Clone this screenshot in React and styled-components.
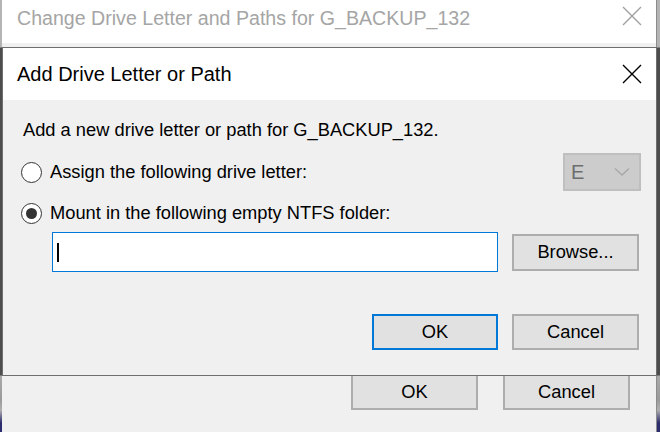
import React from 'react'
import styled, { createGlobalStyle } from 'styled-components'

const Global = createGlobalStyle`
  html, body { margin: 0; padding: 0; background: #f0f0f0; }
  body { font-family: "Liberation Sans", Arial, sans-serif; }
`;

const Desktop = styled.div`
  position: relative;
  width: 660px;
  height: 432px;
  overflow: hidden;
  display: flex;
`;

const Edge = styled.div`
  width: ${p => p.w}px;
  flex: none;
  background: linear-gradient(to bottom, #b4b4b4 0px, #b4b4b4 47px, #4d4d4d 48px, #4d4d4d 375px, #a9a9a9 376px, #9a9a9a 400px, #b0b0b0 410px, #2c2c6e 423px, #2c2c6e 432px);
`;

const BackWindow = styled.div`
  flex: 1;
  display: flex;
  flex-direction: column;
  background: #f0f0f0;
  border-right: 1px solid #8c8c8c;
`;

const BackTitle = styled.div`
  height: 43px;
  flex: none;
  background: #fff;
  display: flex;
  align-items: flex-start;
  justify-content: space-between;
  padding: 6px 14px 0 15px;
  box-sizing: border-box;
  color: #a5a5a5;
  font-size: 19.6px;
  line-height: 24px;
`;

const BackBody = styled.div`
  flex: 1;
  display: flex;
  flex-direction: column;
  justify-content: flex-end;
`;

const ButtonRow = styled.div`
  display: flex;
  justify-content: flex-end;
  gap: ${p => p.gap}px;
  padding: ${p => p.pad};
`;

const Button = styled.div`
  width: ${p => p.w || 126}px;
  height: ${p => p.h || 36}px;
  box-sizing: border-box;
  background: #e1e1e1;
  border: 2px solid ${p => (p.$default ? '#0078d7' : '#adadad')};
  display: flex;
  align-items: center;
  justify-content: center;
  font-size: 18.3px;
  color: #000;
`;

const FrontWindow = styled.div`
  position: absolute;
  left: 2px;
  top: 47px;
  width: 655px;
  height: 329px;
  box-sizing: border-box;
  border: 1px solid #6e6e6e;
  background: #f0f0f0;
  display: flex;
  flex-direction: column;
`;

const FrontTitle = styled.div`
  height: 52px;
  flex: none;
  background: #fff;
  display: flex;
  align-items: center;
  justify-content: space-between;
  padding: 0 14px 0 14px;
  font-size: 20px;
  color: #000;
`;

const FrontBody = styled.div`
  display: flex;
  flex-direction: column;
  padding: 18px 17px 0 18px;
  font-size: 18.3px;
  color: #000;
`;

const Intro = styled.div`
  line-height: 24px;
  padding-left: 2px;
`;

const OptionRow = styled.div`
  display: flex;
  align-items: center;
  justify-content: space-between;
  height: ${p => p.h}px;
  margin-top: ${p => p.mt}px;
`;

const Option = styled.label`
  display: flex;
  align-items: center;
  gap: 8px;
`;

const Radio = styled.span`
  width: 21px;
  height: 21px;
  box-sizing: border-box;
  border-radius: 50%;
  border: 1.5px solid #333;
  background: #fff;
  display: flex;
  align-items: center;
  justify-content: center;
  &::after {
    content: '';
    width: 11px;
    height: 11px;
    border-radius: 50%;
    background: ${p => (p.checked ? '#333' : 'transparent')};
  }
`;

const Select = styled.div`
  width: 78px;
  height: 38px;
  margin-right: -2px;
  box-sizing: border-box;
  background: #cccccc;
  border: 2px solid #bfbfbf;
  display: flex;
  align-items: center;
  justify-content: space-between;
  padding: 0 9px 0 6px;
  color: #6d6d6d;
  font-size: 20px;
`;

const PathRow = styled.div`
  display: flex;
  align-items: center;
  margin-top: 7px;
  margin-left: 31px;
  gap: 14px;
`;

const Input = styled.div`
  width: 446px;
  height: 40px;
  box-sizing: border-box;
  background: #fff;
  border: 1.5px solid #0078d7;
  display: flex;
  align-items: center;
  padding-left: 4px;
`;

const Caret = styled.span`
  width: 2px;
  height: 19px;
  background: #000;
`;

const Close = ({ color }) => (
  <svg width="20" height="20" viewBox="0 0 20 20">
    <path d="M1 1 L19 19 M19 1 L1 19" stroke={color} strokeWidth="1.4" fill="none" />
  </svg>
);

const Chevron = () => (
  <svg width="16" height="10" viewBox="0 0 16 10">
    <path d="M1 1.5 L8 8 L15 1.5" stroke="#a8a8a8" strokeWidth="1.4" fill="none" />
  </svg>
);

const App = () => (
  <>
    <Global />
    <Desktop>
      <Edge w={2} />
      <BackWindow>
        <BackTitle>
          <span>Change Drive Letter and Paths for G_BACKUP_132</span>
          <Close color="#a0a0a0" />
        </BackTitle>
        <BackBody>
          <ButtonRow gap={25} pad="0 26px 22px 0">
            <Button w={127}>OK</Button>
            <Button w={127}>Cancel</Button>
          </ButtonRow>
        </BackBody>
      </BackWindow>
      <Edge w={3} />

      <FrontWindow>
        <FrontTitle>
          <span>Add Drive Letter or Path</span>
          <Close color="#000" />
        </FrontTitle>
        <FrontBody>
          <Intro>Add a new drive letter or path for G_BACKUP_132.</Intro>
          <OptionRow h={38} mt={11}>
            <Option>
              <Radio />
              Assign the following drive letter:
            </Option>
            <Select>
              <span>E</span>
              <Chevron />
            </Select>
          </OptionRow>
          <OptionRow h={24} mt={10}>
            <Option>
              <Radio checked />
              Mount in the following empty NTFS folder:
            </Option>
          </OptionRow>
          <PathRow>
            <Input>
              <Caret />
            </Input>
            <Button w={127} h={37}>Browse...</Button>
          </PathRow>
          <ButtonRow gap={14} pad="42px 0 0 0">
            <Button $default>OK</Button>
            <Button w={127}>Cancel</Button>
          </ButtonRow>
        </FrontBody>
      </FrontWindow>
    </Desktop>
  </>
);

export default App
